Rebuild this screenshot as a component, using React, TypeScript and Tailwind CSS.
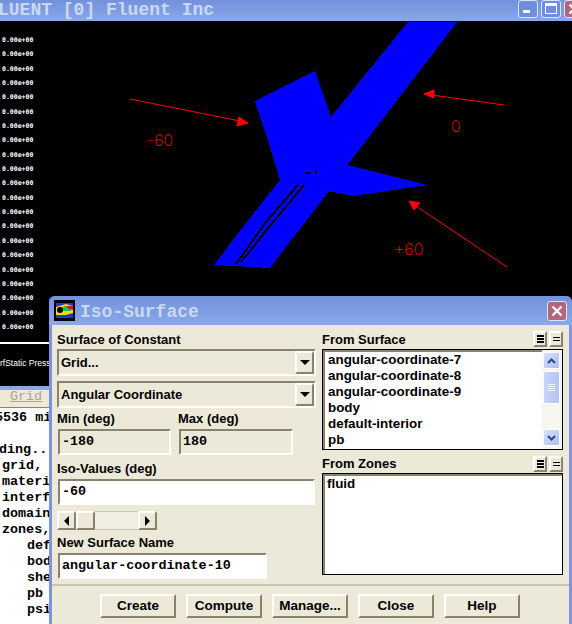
import React from "react";

const MONO = "font-['Liberation_Mono',monospace] font-bold";
const SANS = "font-['Liberation_Sans',Arial,sans-serif] font-bold";
const LABEL = `${SANS} text-[13px] leading-[16px] text-black`;
const SUNKEN = "border-2 border-t-[#87836f] border-l-[#87836f] border-b-white border-r-white";
const RAISED = "border-2 border-t-white border-l-white border-b-[#87836f] border-r-[#87836f]";
const TITLE = "bg-gradient-to-b from-[#7391dc] to-[#89a9e9]";
const RED = "absolute font-['Inter','Liberation_Sans',sans-serif] font-extralight text-[16px] leading-[18px] text-[#ff0000]";

const consoleLines: [string, number][] = [
  ["5536 mi", -5],
  ["", 0],
  ["ding...", -1],
  ["grid,", 2],
  ["materi", 2],
  ["interf", 2],
  ["domain", 2],
  ["zones,", 2],
  ["def", 27],
  ["bod", 27],
  ["she", 27],
  ["pb", 27],
  ["psi", 27],
];

const labels = Array.from({ length: 21 }, (_, i) => i);

function Scene() {
  return (
    <svg viewBox="0 21 572 365" className="absolute inset-0 w-[572px] h-[365px]" shapeRendering="crispEdges">
      <polygon
        fill="#0000ff"
        points="408,22 457,22 359,150 347,165 427,185 353,196 329,191 300,229 291,240 270,268 214,265 240,231 280,180 268,140 255,101 315,71 331,117"
      />
      <g fill="none" stroke="#000" strokeWidth="2">
        <polyline points="304,185 270,226 241,262" />
        <polyline points="298,185 266,222 236,264" />
      </g>
      <g fill="#000">
        <rect x="305" y="172" width="6" height="2" />
        <rect x="315" y="170" width="2" height="3" />
      </g>
      <g stroke="#ff0000" fill="#ff0000" strokeWidth="1" shapeRendering="auto">
        <line x1="130" y1="99" x2="240" y2="121" />
        <polygon points="248,123 237,126 239,117" />
        <line x1="504" y1="105" x2="432" y2="95" />
        <polygon points="424,94 434,90 434,98" />
        <line x1="507" y1="267" x2="416" y2="206" />
        <polygon points="409,201 420,203 414,210" />
      </g>
    </svg>
  );
}

function Arrow({ dir }: { dir: "up" | "down" | "left" | "right" }) {
  const pts = { down: "0,0 10,0 5,5", up: "0,5 10,5 5,0", left: "5,0 5,10 0,5", right: "0,0 0,10 5,5" }[dir];
  const box = dir === "up" || dir === "down" ? "w-[10px] h-[5px]" : "w-[5px] h-[10px]";
  const vb = dir === "up" || dir === "down" ? "0 0 10 5" : "0 0 5 10";
  return (
    <svg viewBox={vb} className={box}>
      <polygon points={pts} fill="#000" />
    </svg>
  );
}

function Dropdown({ text }: { text: string }) {
  return (
    <div className={`h-[27px] w-[259px] flex items-center justify-between bg-[#ece9d8] ${SUNKEN}`}>
      <span className={`pl-[2px] text-[13px] text-black ${SANS}`}>{text}</span>
      <div className={`w-[19px] h-[23px] flex items-center justify-center bg-[#ece9d8] ${RAISED}`}>
        <Arrow dir="down" />
      </div>
    </div>
  );
}

function Field({ value, w, white }: { value: string; w: string; white?: boolean }) {
  return (
    <div className={`h-[26px] flex items-center pl-[2px] ${w} ${white ? "bg-white" : "bg-[#ece9d8]"} ${SUNKEN}`}>
      <span className={`${MONO} text-[13.4px] text-black whitespace-nowrap`}>{value}</span>
    </div>
  );
}

function SmallButtons() {
  return (
    <div className="flex gap-[2px]">
      <div className={`w-[14px] h-[16px] flex flex-col items-center justify-center gap-[1px] ${RAISED} border`}>
        <div className="w-[7px] h-[2px] bg-black" />
        <div className="w-[7px] h-[2px] bg-black" />
        <div className="w-[7px] h-[2px] bg-black" />
      </div>
      <div className={`w-[14px] h-[16px] flex flex-col items-center justify-center gap-[2px] ${RAISED} border`}>
        <div className="w-[7px] h-[1px] bg-black" />
        <div className="w-[7px] h-[1px] bg-black" />
      </div>
    </div>
  );
}

function ScrollBtn({ dir }: { dir: "up" | "down" }) {
  return (
    <div className="w-[17px] h-[17px] rounded-[2px] border border-white bg-gradient-to-br from-[#d5e0fb] to-[#aebff0] flex items-center justify-center">
      <svg viewBox="0 0 9 6" className="w-[9px] h-[6px]">
        <polyline
          points={dir === "up" ? "1,5 4.5,1.5 8,5" : "1,1 4.5,4.5 8,1"}
          fill="none"
          stroke="#2d4a8a"
          strokeWidth="2"
        />
      </svg>
    </div>
  );
}

function DlgButton({ text }: { text: string }) {
  return (
    <div className={`w-[76px] h-[24px] flex items-center justify-center bg-[#ece9d8] ${RAISED}`}>
      <span className={`${SANS} text-[13.5px] text-black`}>{text}</span>
    </div>
  );
}

function Dialog() {
  return (
    <div className="absolute left-[49px] top-[296px] w-[523px] h-[328px] rounded-t-[6px] bg-[#7b93e0] pl-[3px] pr-[3px] flex flex-col overflow-hidden">
      <div className={`h-[29px] -mx-[3px] px-[5px] flex items-center ${TITLE}`}>
        <div className="w-[21px] h-[21px] bg-black flex items-center justify-center">
          <svg viewBox="0 0 17 15" className="w-[17px] h-[15px]">
            <rect width="17" height="15" fill="#2238c8" />
            <path d="M0 4 L10 1 L17 3 L17 10 L10 12 L0 12Z" fill="#ffd800" />
            <path d="M3 6 L9 3 L15 5 L15 8 L8 8 Z" fill="#12c840" />
            <path d="M10 3 L17 3 L17 7 L13 6Z" fill="#e81010" />
            <ellipse cx="4" cy="7" rx="3" ry="3" fill="#000" />
          </svg>
        </div>
        <span className="ml-[5px] mt-[3px] font-['Liberation_Mono',monospace] font-bold text-[18px] leading-[20px] text-[#c9d9f4]">Iso-Surface</span>
        <div className="ml-auto w-[20px] h-[20px] rounded-[3px] border border-[#dfe4f4] bg-[#b0667c] flex items-center justify-center">
          <svg viewBox="0 0 12 12" className="w-[12px] h-[12px]">
            <path d="M1.5 1.5 L10.5 10.5 M10.5 1.5 L1.5 10.5" stroke="#fff" strokeWidth="2.2" />
          </svg>
        </div>
      </div>
      <div className="flex-1 bg-[#ece9d8] flex flex-col">
        <div className="flex pl-[5px] pt-[6px] h-[261px] border-b-2 border-b-[#c9c6b5]">
          <div className="w-[265px] flex flex-col">
            <div className={`${LABEL} translate-y-[1px]`}>Surface of Constant</div>
            <div className="mt-[2px]"><Dropdown text="Grid..." /></div>
            <div className="mt-[5px]"><Dropdown text="Angular Coordinate" /></div>
            <div className="flex mt-[3px]">
              <div className="w-[121px]">
                <div className={LABEL}>Min (deg)</div>
                <div className="mt-[2px] ml-[1px]"><Field value="-180" w="w-[113px]" /></div>
              </div>
              <div>
                <div className={LABEL}>Max (deg)</div>
                <div className="mt-[2px] ml-[1px]"><Field value="180" w="w-[114px]" /></div>
              </div>
            </div>
            <div className={`${LABEL} mt-[6px]`}>Iso-Values (deg)</div>
            <div className="mt-[2px] ml-[1px]"><Field value="-60" w="w-[257px]" white /></div>
            <div className="mt-[6px] w-[100px] h-[19px] flex">
              <div className={`w-[19px] h-[19px] flex items-center justify-center ${RAISED}`}><Arrow dir="left" /></div>
              <div className={`w-[19px] h-[19px] ${RAISED}`} />
              <div className="flex-1 border-t border-b border-[#c9c6b5] bg-[#f0eee2]" />
              <div className={`w-[19px] h-[19px] flex items-center justify-center ${RAISED}`}><Arrow dir="right" /></div>
            </div>
            <div className={`${LABEL} mt-[5px]`}>New Surface Name</div>
            <div className="mt-[2px] ml-[1px]"><Field value="angular-coordinate-10" w="w-[209px]" white /></div>
          </div>
          <div className="w-[241px] flex flex-col">
            <div className="flex items-end justify-between h-[16px]">
              <div className={`${LABEL} translate-y-[1px]`}>From Surface</div>
              <SmallButtons />
            </div>
            <div className="mt-[2px] h-[101px] border border-black bg-white flex overflow-hidden">
              <div className="flex-1 border-t-2 border-l-2 border-t-[#87836f] border-l-[#87836f] pl-[3px]">
                {["angular-coordinate-7", "angular-coordinate-8", "angular-coordinate-9", "body", "default-interior", "pb"].map((t) => (
                  <div key={t} className={`${SANS} text-[13.4px] leading-[16px] text-black`}>{t}</div>
                ))}
              </div>
              <div className="w-[20px] pt-[2px] pr-[2px] bg-[#f6f5ee] flex flex-col items-center">
                <ScrollBtn dir="up" />
                <div className="mt-[2px] w-[17px] h-[33px] rounded-[2px] border border-white bg-gradient-to-r from-[#c6d4fa] to-[#b3c5f5] flex flex-col items-center justify-center gap-[1px]">
                  {[0, 1, 2, 3].map((i) => (
                    <div key={i} className="w-[7px] h-[1px] bg-[#eef2ff]" />
                  ))}
                </div>
                <div className="mt-[25px]"><ScrollBtn dir="down" /></div>
              </div>
            </div>
            <div className="flex items-end justify-between h-[16px] mt-[6px]">
              <div className={LABEL}>From Zones</div>
              <SmallButtons />
            </div>
            <div className="mt-[1px] h-[102px] border border-black bg-white">
              <div className="h-full border-t-2 border-l-2 border-t-[#87836f] border-l-[#87836f] pl-[2px]">
                <div className={`${SANS} text-[13.4px] leading-[16px] text-black`}>fluid</div>
              </div>
            </div>
          </div>
        </div>
        <div className="flex-1 flex gap-[10px] pl-[48px] pt-[8px]">
          {["Create", "Compute", "Manage...", "Close", "Help"].map((t) => (
            <DlgButton key={t} text={t} />
          ))}
        </div>
      </div>
    </div>
  );
}

export default function App() {
  return (
    <div className="relative w-[572px] h-[624px] overflow-hidden bg-white">
      <div className={`h-[21px] flex items-center overflow-hidden ${TITLE}`}>
        <span className="-ml-[2px] -mt-[2px] font-['Liberation_Mono',monospace] font-bold text-[18px] leading-[20px] whitespace-nowrap text-[#c9d9f4]">LUENT [0] Fluent Inc</span>
        <div className="ml-auto flex gap-[3px] -mt-[4px] -mr-[12px]">
          <div className="w-[20px] h-[18px] rounded-[3px] border border-[#dfe4f4] bg-[#6e8fe0] flex items-end pl-[4px] pb-[4px]">
            <div className="w-[7px] h-[3px] bg-white" />
          </div>
          <div className="w-[20px] h-[18px] rounded-[3px] border border-[#dfe4f4] bg-[#6e8fe0] flex items-center justify-center">
            <div className="w-[12px] h-[11px] border border-t-[3px] border-white" />
          </div>
          <div className="w-[20px] h-[18px] rounded-[3px] border border-[#dfe4f4] bg-[#b0667c] flex items-center justify-center">
            <svg viewBox="0 0 12 12" className="w-[12px] h-[12px]">
              <path d="M1.5 1.5 L10.5 10.5 M10.5 1.5 L1.5 10.5" stroke="#fff" strokeWidth="2.2" />
            </svg>
          </div>
        </div>
      </div>

      <div className="relative h-[365px] bg-black overflow-hidden">
        <Scene />
        <div className={`${RED} left-[147px] top-[110px]`}>-60</div>
        <div className={`${RED} left-[451px] top-[96px]`}>0</div>
        <div className={`${RED} left-[394px] top-[219px]`}>+60</div>
        <div className="relative pl-[2px] pt-[12px] flex flex-col">
          {labels.map((i) => (
            <div key={i} className="h-[14.35px] font-['DejaVu_Sans_Mono',monospace] font-bold text-[6.5px] leading-[14px] text-white whitespace-nowrap">0.00e+00</div>
          ))}
        </div>
        <div className="relative mt-[8px] h-[2px] bg-white" />
        <div className="relative mt-[14px] font-['Liberation_Sans',sans-serif] text-[8.5px] leading-[10px] text-white whitespace-nowrap">rfStatic Press</div>
      </div>

      <div className="h-[4px] bg-[#8da6e4]" />
      <div className="h-[18px] bg-[#ece9d8] border-b border-[#87836f] pl-[10px] flex items-center">
        <span className="-mt-[2px] font-['Liberation_Mono',monospace] text-[13.4px] text-[#a8a595] underline">Grid</span>
      </div>
      <div className="pt-[2px] overflow-hidden">
        {consoleLines.map(([l, x], i) => (
          <div key={i} style={{ marginLeft: x }} className={`h-[16px] ${MONO} text-[13.4px] leading-[16px] text-black whitespace-pre`}>{l}</div>
        ))}
      </div>

      <Dialog />
    </div>
  );
}
